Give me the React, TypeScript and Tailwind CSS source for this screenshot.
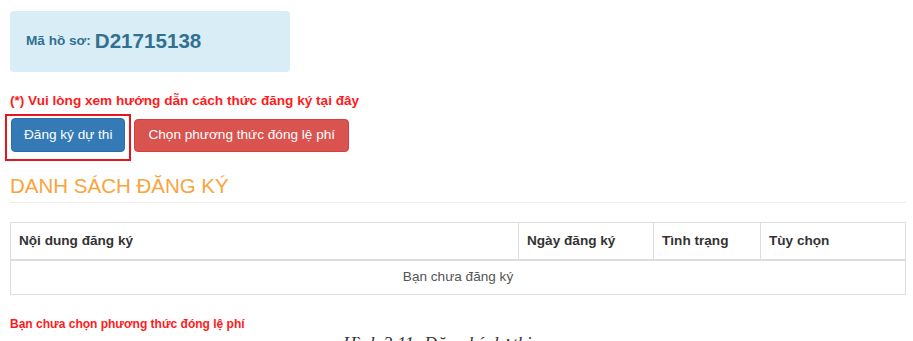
const columns = [
  { label: "Nội dung đăng ký", width: "w-[508px]" },
  { label: "Ngày đăng ký", width: "w-[135px]" },
  { label: "Tình trạng", width: "w-[107px]" },
  { label: "Tùy chọn", width: "" },
]

export default function App() {
  return (
    <div className="h-[341px] w-[913px] overflow-hidden bg-white font-['Liberation_Sans',Arial,sans-serif] text-[13.6px] text-[#333]">
      <div className="w-[906px] pl-[10px] pt-[11px]">
        <div className="flex h-[61px] w-[280px] items-center rounded-[4px] bg-[#d9edf7] pl-4 font-bold text-[#31708f]">
          <span className="text-[13.6px]">Mã hồ sơ:</span>
          <span className="ml-1 text-[20.6px] leading-none">D21715138</span>
        </div>

        <p className="mt-[20px] text-[13.6px] font-bold leading-[18px] text-[#ff1a1a]">
          (*) Vui lòng xem hướng dẫn cách thức đăng ký tại đây
        </p>

        <div className="-ml-[5px] mt-[4px] flex items-start">
          <div className="border-2 border-[#e8141b] px-[4px] pb-[7px] pt-[2px]">
            <button className="h-[34px] rounded-[4px] border border-[#2e6da4] bg-[#337ab7] px-3 text-[13.6px] text-white">
              Đăng ký dự thi
            </button>
          </div>
          <button className="ml-[3px] mt-[5px] h-[33px] rounded-[4px] border border-[#d43f3a] bg-[#d9534f] px-[13px] text-[13.6px] text-white">
            Chọn phương thức đóng lệ phí
          </button>
        </div>

        <h2 className="mt-[14px] border-b border-[#eee] pb-[5px] text-[20.5px] leading-[22px] text-[#f9a43c]">
          DANH SÁCH ĐĂNG KÝ
        </h2>

        <table className="mt-[19px] w-full border-collapse border border-[#ddd]">
          <thead>
            <tr className="h-[37px] border-b-2 border-[#ddd]">
              {columns.map((col) => (
                <th
                  key={col.label}
                  className={`${col.width} border border-[#ddd] px-2 text-left text-[13.6px] font-bold`}
                >
                  {col.label}
                </th>
              ))}
            </tr>
          </thead>
          <tbody>
            <tr className="h-[35px]">
              <td colSpan={4} className="border border-[#ddd] text-center text-[13.6px] text-[#555]">
                Bạn chưa đăng ký
              </td>
            </tr>
          </tbody>
        </table>

        <p className="mt-[21px] text-[12px] font-bold leading-[16px] text-[#ff1a1a]">
          Bạn chưa chọn phương thức đóng lệ phí
        </p>

        <p className="ml-[333px] mt-[2px] font-['Liberation_Serif',serif] text-[18px] italic leading-[20px] text-[#333]">
          Hình 3.11: Đăng ký dự thi
        </p>
      </div>
    </div>
  )
}
